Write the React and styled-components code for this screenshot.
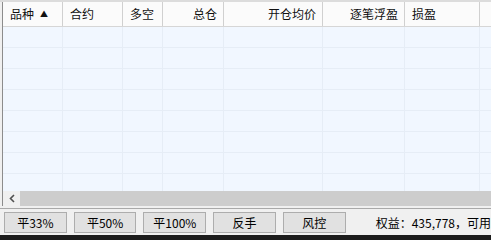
import React from "react";
import styled, { createGlobalStyle } from "styled-components";

const Global = createGlobalStyle`
  html, body { margin: 0; padding: 0; background: #f0f0f0; }
  body { width: 491px; height: 240px; overflow: hidden; font-family: "Noto Sans CJK SC", "Liberation Sans", sans-serif; font-size: 12px; color: #000; }
`;

const Frame = styled.div`
  width: 491px;
  height: 240px;
  display: flex;
  flex-direction: column;
  background: #f0f0f0;
`;

const TopEdge = styled.div`
  height: 2px;
  background: #dcdcdc;
`;

const Table = styled.div`
  margin-left: 2px;
  border-left: 1px solid #8c8c8c;
  display: flex;
  flex-direction: column;
  height: 204px;
  background: #f1f7ff;
`;

const cols = "60px 60px 40px 61px 99px 82px 75px 1fr";

const Header = styled.div`
  display: grid;
  grid-template-columns: ${cols};
  height: 24px;
  background: #fbfbfb;
  border-bottom: 1px solid #d6d6d6;
  flex: none;
`;

const HeadCell = styled.div`
  display: flex;
  align-items: center;
  justify-content: ${(p) => (p.$right ? "flex-end" : "flex-start")};
  padding: ${(p) => (p.$right ? "0 6px 0 0" : "0 0 0 7px")};
  border-right: ${(p) => (p.$last ? "none" : "1px solid #d0d0d0")};
  font-size: 12px;
  color: #111;
  white-space: nowrap;
  line-height: 1;
`;

const Arrow = styled.span`
  font-size: 8px;
  margin-left: 6px;
  margin-top: -1px;
`;

const Body = styled.div`
  flex: 1;
  display: flex;
  flex-direction: column;
  overflow: hidden;
`;

const Row = styled.div`
  display: grid;
  grid-template-columns: ${cols};
  height: 21px;
  flex: none;
  border-bottom: 1px solid #e6edf6;
  box-sizing: border-box;
`;

const Cell = styled.div`
  border-right: ${(p) => (p.$last ? "none" : "1px solid #e6edf6")};
`;

const ScrollBar = styled.div`
  height: 15px;
  display: flex;
  flex: none;
  background: #f0f0f0;
`;

const ScrollBtn = styled.div`
  width: 17px;
  display: flex;
  align-items: center;
  justify-content: center;
  background: #f0f0f0;
`;

const Thumb = styled.div`
  flex: 1;
  background: #cdcdcd;
`;

const StatusBar = styled.div`
  flex: 1;
  border-top: 1px solid #a9a9a9;
  margin-top: 2px;
  display: flex;
  align-items: center;
  padding-left: 4px;
  gap: 7px;
  background: #f0f0f0;
`;

const Btn = styled.button`
  width: 64px;
  height: 21px;
  box-sizing: border-box;
  border: 1px solid #adadad;
  background: #e1e1e1;
  font-family: "Noto Sans CJK SC", "Liberation Sans", sans-serif;
  font-size: 12px;
  padding: 0;
  color: #000;
  display: flex;
  align-items: center;
  justify-content: center;
  margin-top: 1px;
`;

const Info = styled.div`
  margin-left: 23px;
  white-space: nowrap;
  font-size: 12px;
`;

const BottomBar = styled.div`
  height: 5px;
  background: #1c1c1c;
  flex: none;
`;

const headers = [
  { t: "品种", arrow: true },
  { t: "合约" },
  { t: "多空" },
  { t: "总仓", right: true },
  { t: "开仓均价", right: true },
  { t: "逐笔浮盈", right: true },
  { t: "损盈" },
  { t: "", last: true },
];

export default function App() {
  return (
    <Frame>
      <Global />
      <TopEdge />
      <Table>
        <Header>
          {headers.map((h, i) => (
            <HeadCell key={i} $right={h.right} $last={h.last}>
              {h.t}
              {h.arrow && <Arrow>▲</Arrow>}
            </HeadCell>
          ))}
        </Header>
        <Body>
          {Array.from({ length: 8 }).map((_, r) => (
            <Row key={r}>
              {headers.map((h, i) => (
                <Cell key={i} $last={h.last} />
              ))}
            </Row>
          ))}
        </Body>
        <ScrollBar>
          <ScrollBtn>
            <svg width="6" height="9" viewBox="0 0 6 9">
              <path d="M5 1 L1.5 4.5 L5 8" fill="none" stroke="#505050" strokeWidth="1.6" />
            </svg>
          </ScrollBtn>
          <Thumb />
        </ScrollBar>
      </Table>
      <StatusBar>
        <Btn>平33%</Btn>
        <Btn>平50%</Btn>
        <Btn>平100%</Btn>
        <Btn>反手</Btn>
        <Btn>风控</Btn>
        <Info>权益：435,778，可用</Info>
      </StatusBar>
      <BottomBar />
    </Frame>
  );
}
